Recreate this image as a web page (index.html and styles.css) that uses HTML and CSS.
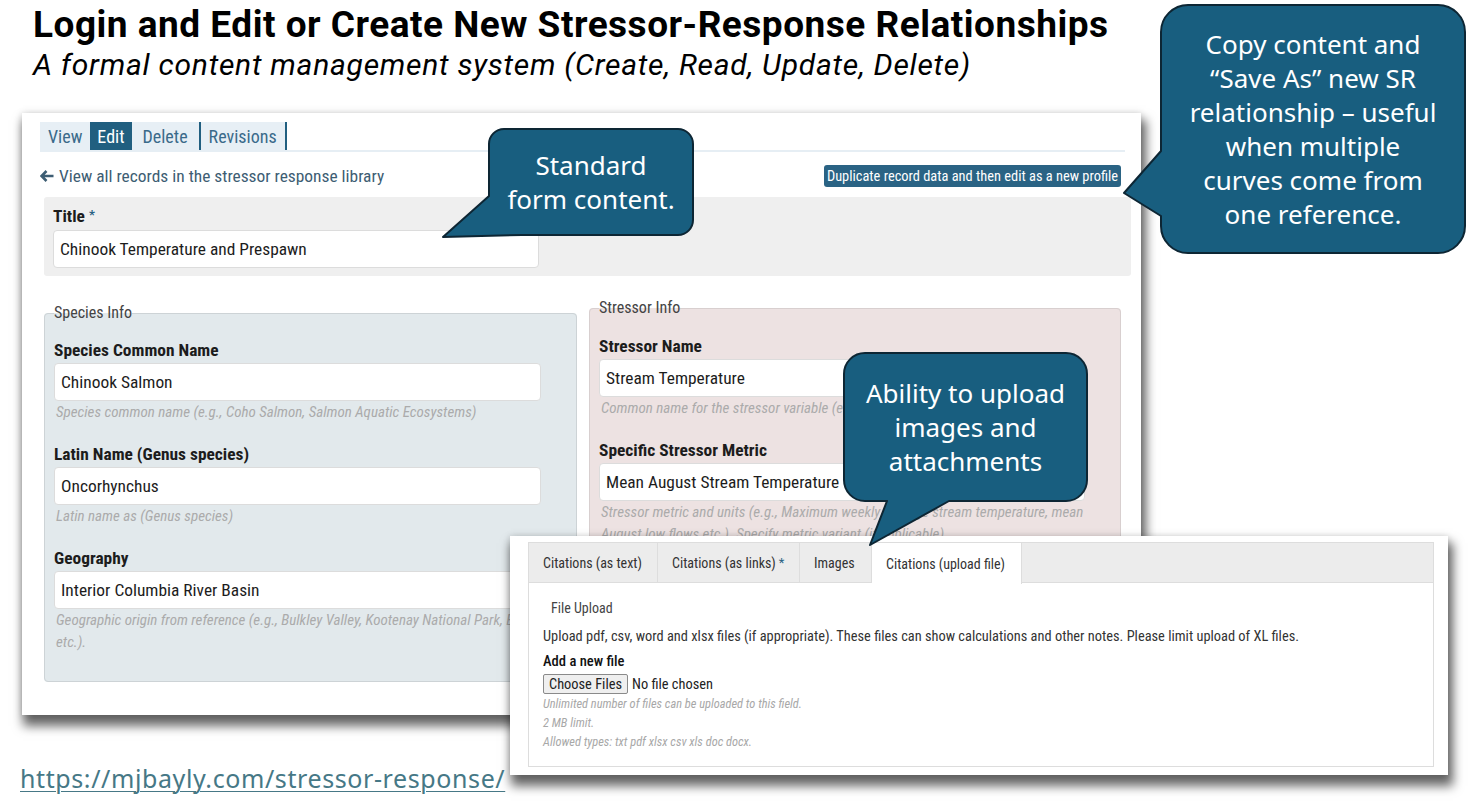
FILE: index.html
```html
<!DOCTYPE html>
<html lang="en">
<head>
<meta charset="utf-8">
<title>Login and Edit or Create New Stressor-Response Relationships</title>
<link rel="stylesheet" href="styles.css">
</head>
<body>
<div class="slide">
  <header class="head">
    <h1 class="head-title">Login and Edit or Create New Stressor-Response Relationships</h1>
    <p class="head-sub">A formal content management system (Create, Read, Update, Delete)</p>
  </header>

  <section class="shot shot-main app">
    <nav class="tabs">
      <a class="tab">View</a><a class="tab tab-active">Edit</a><a class="tab tab-del">Delete</a><a class="tab tab-rev">Revisions</a>
    </nav>
    <div class="backrow">
      <a class="back">
        <svg class="back-icon" viewBox="0 0 14 12" width="14" height="12"><path d="M6.5 1 L1.5 6 L6.5 11 M1.5 6 H13.5" fill="none" stroke="currentColor" stroke-width="2.6" stroke-linecap="butt" stroke-linejoin="miter"/></svg>
        <span>View all records in the stressor response library</span>
      </a>
      <span class="dup">Duplicate record data and then edit as a new profile</span>
    </div>
    <div class="title-panel">
      <div class="lbl">Title <span class="req">*</span></div>
      <div class="input input-title">Chinook Temperature and Prespawn</div>
    </div>
    <div class="cols">
      <fieldset class="fs fs-species">
        <legend class="fs-legend">Species Info</legend>
        <div class="field">
          <div class="lbl">Species Common Name</div>
          <div class="input">Chinook Salmon</div>
          <div class="help">Species common name (e.g., Coho Salmon, Salmon Aquatic Ecosystems)</div>
        </div>
        <div class="field">
          <div class="lbl">Latin Name (Genus species)</div>
          <div class="input">Oncorhynchus</div>
          <div class="help">Latin name as (Genus species)</div>
        </div>
        <div class="field">
          <div class="lbl">Geography</div>
          <div class="input">Interior Columbia River Basin</div>
          <div class="help">Geographic origin from reference (e.g., Bulkley Valley, Kootenay National Park, BC,<br>etc.).</div>
        </div>
      </fieldset>
      <fieldset class="fs fs-stressor">
        <legend class="fs-legend">Stressor Info</legend>
        <div class="field">
          <div class="lbl">Stressor Name</div>
          <div class="input">Stream Temperature</div>
          <div class="help">Common name for the stressor variable (e.g., Stream Temperature)</div>
        </div>
        <div class="field">
          <div class="lbl">Specific Stressor Metric</div>
          <div class="input">Mean August Stream Temperature</div>
          <div class="help">Stressor metric and units (e.g., Maximum weekly average stream temperature, mean<br>August low flows etc.). Specify metric variant (if applicable).</div>
        </div>
      </fieldset>
    </div>
  </section>

  <div class="callout callout-form">
    <svg class="callout-shape" width="206" height="108" viewBox="0 0 206 108"><path d="M16 1 H190 A15 15 0 0 1 205 16 V92 A15 15 0 0 1 190 107 H34 L-45 109 L1 68 V16 A15 15 0 0 1 16 1 Z"/></svg>
    <div class="callout-text">Standard<br>form content.</div>
  </div>

  <div class="callout callout-copy">
    <svg class="callout-shape" width="306" height="250" viewBox="0 0 306 250"><path d="M28 1 H278 A27 27 0 0 1 305 28 V222 A27 27 0 0 1 278 249 H28 A27 27 0 0 1 1 222 V212 L-36 189 L1 147 V28 A27 27 0 0 1 28 1 Z"/></svg>
    <div class="callout-text">Copy content and<br>“Save As” new SR<br>relationship – useful<br>when multiple<br>curves come from<br>one reference.</div>
  </div>

  <section class="shot shot-files app">
    <div class="files-box">
      <div class="ftabs">
        <span class="ftab">Citations (as text)</span><span class="ftab">Citations (as links) <span class="req">*</span></span><span class="ftab">Images</span><span class="ftab ftab-active">Citations (upload file)</span>
      </div>
      <div class="files-body">
        <div class="files-legend">File Upload</div>
        <div class="files-desc">Upload pdf, csv, word and xlsx files (if appropriate). These files can show calculations and other notes. Please limit upload of XL files.</div>
        <div class="files-lbl">Add a new file</div>
        <div class="file-row"><span class="file-btn">Choose Files</span><span class="file-none">No file chosen</span></div>
        <div class="files-help">Unlimited number of files can be uploaded to this field.</div>
        <div class="files-help">2 MB limit.</div>
        <div class="files-help">Allowed types: txt pdf xlsx csv xls doc docx.</div>
      </div>
    </div>
  </section>

  <div class="callout callout-upload">
    <svg class="callout-shape" width="245" height="150" viewBox="0 0 245 150"><path d="M22 1 H223 A21 21 0 0 1 244 22 V128 A21 21 0 0 1 223 149 H106 L27 193 L44 149 H22 A21 21 0 0 1 1 128 V22 A21 21 0 0 1 22 1 Z"/></svg>
    <div class="callout-text">Ability to upload<br>images and<br>attachments</div>
  </div>

  <a class="url">https://mjbayly.com/stressor-response/</a>
</div>
</body>
</html>
```

FILE: styles.css
```css
* { box-sizing: border-box; }

html, body {
  margin: 0;
  padding: 0;
  background: #ffffff;
}

.slide {
  position: relative;
  width: 1476px;
  height: 808px;
  overflow: hidden;
  background: #ffffff;
}

/* ---------- slide heading ---------- */
.head {
  padding: 3px 0 0 33px;
  font-family: Roboto, "Liberation Sans", sans-serif;
  color: #000;
}
.head-title {
  margin: 0;
  font-size: 37px;
  line-height: 44px;
  font-weight: 700;
  letter-spacing: 0.5px;
}
.head-sub {
  margin: 0;
  font-size: 30px;
  line-height: 36px;
  font-style: italic;
  letter-spacing: 0.75px;
}

/* ---------- screenshots ---------- */
.app {
  font-family: "Roboto Condensed", "Liberation Sans Narrow", "Arial Narrow", Roboto, sans-serif;
  color: #222;
}
.shot {
  position: absolute;
  background: #fff;
  box-shadow: 3px 9px 10px 2px rgba(0, 0, 0, 0.6), 0 0 7px rgba(0, 0, 0, 0.14);
}
.shot-main {
  left: 22px;
  top: 113px;
  width: 1119px;
  height: 602px;
  padding: 9px 10px 0 18px;
}

.tabs {
  display: flex;
  height: 30px;
  margin-right: 6px;
  border-bottom: 2px solid #e6eef4;
}
.tab {
  display: flex;
  align-items: center;
  height: 28px;
  padding: 0 8px;
  background: #e7eff5;
  color: #3a6a8a;
  font-size: 18px;
}
.tab-active {
  background: #215f80;
  color: #fff;
  padding: 0 7px;
}
.tab-del { padding: 0 11px; }
.tab-rev {
  border-left: 2px solid #215f80;
  border-right: 2px solid #215f80;
}

.backrow {
  display: flex;
  justify-content: space-between;
  align-items: center;
  height: 22px;
  margin-top: 13px;
  padding-right: 10px;
}
.back {
  display: flex;
  align-items: center;
  gap: 5px;
  color: #3d5d73;
  font-size: 17.4px;
}
.back-icon { display: block; }
.dup {
  display: flex;
  align-items: center;
  height: 22px;
  padding: 0 3px;
  background: #2a6384;
  color: #fff;
  font-size: 14.4px;
  border-radius: 3px;
}

.title-panel {
  margin: 10px 0 0 4px;
  padding: 9px 9px 8px;
  background: #efefef;
  border-radius: 3px;
}
.lbl {
  font-size: 17.4px;
  line-height: 18px;
  font-weight: 700;
  color: #1c1c1c;
  margin-bottom: 5px;
}
.req {
  color: #2a6384;
  font-size: 13px;
  vertical-align: 3px;
}
.input {
  height: 38px;
  display: flex;
  align-items: center;
  padding: 0 6px;
  background: #fff;
  border: 1px solid #dcdcdc;
  border-radius: 4px;
  font-size: 17.4px;
  color: #1c1c1c;
  white-space: nowrap;
  overflow: hidden;
}
.input-title { width: 486px; }

.cols {
  display: flex;
  align-items: flex-start;
  gap: 12px;
  margin: 22px 0 0 4px;
}
.fs {
  margin: 0;
  padding: 0 9px 28px;
  border: 1px solid #cdd3d6;
  border-radius: 4px;
  min-width: 0;
}
.fs-species {
  width: 533px;
  margin-top: 5px;
  background: #e2e9ec;
}
.fs-stressor {
  width: 532px;
  background: #ede2e2;
  border-color: #d8cfcf;
}
.fs-legend {
  padding: 0;
  font-size: 16px;
  line-height: 20px;
  color: #444;
}
.field { margin-top: 17px; }
.field + .field { margin-top: 21px; }
.fs-stressor .field:first-of-type { margin-top: 18px; }
.field .lbl {
  line-height: 20px;
  margin-bottom: 3px;
}
.field .input { width: 487px; }
.fs-stressor .field .input { width: 486px; }
.help {
  font-size: 15px;
  line-height: 22px;
  font-style: italic;
  color: #ababab;
  padding-left: 2px;
  white-space: nowrap;
}

/* ---------- upload screenshot ---------- */
.shot-files {
  left: 510px;
  top: 536px;
  width: 938px;
  height: 239px;
  padding: 6px 14px 8px 18px;
}
.files-box {
  height: 225px;
  border: 1px solid #dddddd;
}
.ftabs {
  display: flex;
  height: 40px;
  background: #ececec;
  border-bottom: 1px solid #dddddd;
}
.ftab {
  display: flex;
  align-items: center;
  padding: 0 14px;
  font-size: 14px;
  color: #333;
  border-right: 1px solid #dddddd;
  white-space: nowrap;
}
.ftab:nth-child(1) { width: 129px; }
.ftab:nth-child(2) { width: 142px; }
.ftab:nth-child(3) { width: 72px; }
.ftab:nth-child(4) { width: 150px; }
.ftab .req { margin-left: 3px; }
.ftab-active {
  background: #fff;
  height: 41px;
}
.files-body {
  padding: 15px 15px 0 14px;
}
.files-legend {
  padding-left: 8px;
  font-size: 14px;
  line-height: 20px;
  color: #444;
}
.files-desc {
  margin-top: 9px;
  font-size: 14.4px;
  line-height: 20px;
  color: #333;
  white-space: nowrap;
}
.files-lbl {
  margin-top: 4px;
  font-size: 14.6px;
  line-height: 20px;
  font-weight: 500;
  color: #111;
}
.file-row {
  display: flex;
  align-items: center;
  gap: 4px;
  margin-top: 3px;
  height: 20px;
  font-size: 14.4px;
  color: #222;
}
.file-btn {
  display: flex;
  align-items: center;
  height: 20px;
  padding: 0 5px;
  background: #efefef;
  border: 1px solid #8a8a8a;
  border-radius: 2px;
}
.files-help {
  font-size: 12.4px;
  line-height: 19px;
  font-style: italic;
  color: #a8a8a8;
}

/* ---------- callouts ---------- */
.callout {
  position: absolute;
  display: flex;
  align-items: center;
  justify-content: center;
  font-family: "Noto Sans", "Open Sans", sans-serif;
  color: #fff;
  text-align: center;
}
.callout-shape {
  position: absolute;
  left: 0;
  top: 0;
  overflow: visible;
}
.callout-shape path {
  fill: #185e7f;
  stroke: #0d2634;
  stroke-width: 2;
  stroke-linejoin: round;
}
.callout-text {
  position: relative;
  font-size: 26px;
  line-height: 34px;
}
.callout-form {
  left: 488px;
  top: 128px;
  width: 206px;
  height: 108px;
}
.callout-copy {
  left: 1160px;
  top: 4px;
  width: 306px;
  height: 250px;
}
.callout-upload {
  left: 843px;
  top: 352px;
  width: 245px;
  height: 150px;
}

/* ---------- link ---------- */
.url {
  position: absolute;
  left: 20px;
  top: 762px;
  font-family: "Noto Sans", "Open Sans", sans-serif;
  font-size: 25px;
  line-height: 32px;
  letter-spacing: 0.6px;
  color: #467886;
  text-decoration: underline;
  text-decoration-thickness: 1px;
  text-underline-offset: 3px;
}
```
